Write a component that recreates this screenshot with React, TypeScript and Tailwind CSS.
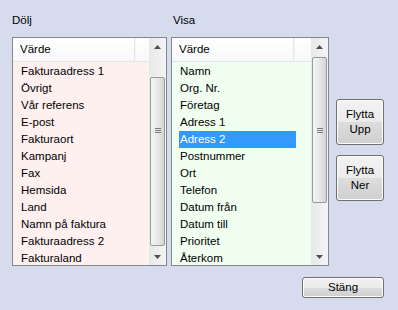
import React from "react"

const hidden = [
  "Fakturaadress 1",
  "Övrigt",
  "Vår referens",
  "E-post",
  "Fakturaort",
  "Kampanj",
  "Fax",
  "Hemsida",
  "Land",
  "Namn på faktura",
  "Fakturaadress 2",
  "Fakturaland",
]

const shown = [
  "Namn",
  "Org. Nr.",
  "Företag",
  "Adress 1",
  "Adress 2",
  "Postnummer",
  "Ort",
  "Telefon",
  "Datum från",
  "Datum till",
  "Prioritet",
  "Återkom",
]

function Arrow({ up }: { up?: boolean }) {
  return (
    <div className="h-[17px] flex items-center justify-center">
      <svg width="7" height="4" viewBox="0 0 7 4">
        {up ? <path d="M0 4 L3.5 0 L7 4 Z" fill="#4d4d4d" /> : <path d="M0 0 L3.5 4 L7 0 Z" fill="#4d4d4d" />}
      </svg>
    </div>
  )
}

function ScrollBar({ before, thumb, grip }: { before: number; thumb: number; grip: number }) {
  return (
    <div className="w-[17px] h-full flex flex-col bg-gradient-to-r from-[#e8e8e8] to-[#f4f4f4] shrink-0">
      <Arrow up />
      <div className="flex-1 flex flex-col items-center">
        <div style={{ height: before }} />
        <div
          className="w-[15px] rounded-[2px] border border-[#9a9a9a] bg-gradient-to-r from-[#f5f5f5] via-[#e8e8e8] to-[#d4d4d4] flex flex-col items-center gap-[1px]"
          style={{ height: thumb, paddingTop: grip }}
        >
          <div className="w-[6px] h-[1px] bg-[#7a7a7a]" />
          <div className="w-[6px] h-[1px] bg-[#7a7a7a]" />
          <div className="w-[6px] h-[1px] bg-[#7a7a7a]" />
        </div>
      </div>
      <Arrow />
    </div>
  )
}

function ListBox({
  items,
  bg,
  width,
  selected,
  before,
  thumb,
  grip,
}: {
  items: string[]
  bg: string
  width: string
  selected?: number
  before: number
  thumb: number
  grip: number
}) {
  return (
    <div className={`${width} h-[229px] border border-[#828790] flex ${bg}`}>
      <div className="flex-1 flex flex-col overflow-hidden">
        <div className="h-[24px] shrink-0 flex bg-gradient-to-b from-white to-[#f7f8fa] border-b border-[#e5e5e5]">
          <div className="w-[122px] pl-[7px] flex items-center border-r border-[#e5e5e5]">Värde</div>
          <div className="w-[1px] bg-[#f5f5f5]" />
        </div>
        <div className="pt-[1px]">
          {items.map((t, i) => (
            <div key={t} className="h-[17px] flex items-center">
              <div
                className={`w-[117px] ml-[7px] h-full flex items-center pl-[1px] ${i === selected ? "bg-[#3399ff] text-white" : ""}`}
              >
                {t}
              </div>
            </div>
          ))}
        </div>
      </div>
      <ScrollBar before={before} thumb={thumb} grip={grip} />
    </div>
  )
}

function Btn({ children, className }: { children: React.ReactNode; className: string }) {
  return (
    <div
      className={`${className} rounded-[3px] border border-[#707070] shadow-[inset_0_0_0_1px_#fcfcfc] bg-[linear-gradient(to_bottom,#f2f2f2_0%,#ebebeb_50%,#dddddd_50%,#cfcfcf_100%)] flex flex-col items-center justify-center leading-[15px] text-center`}
    >
      {children}
    </div>
  )
}

export default function App() {
  return (
    <div
      className="w-[398px] h-[310px] bg-[#d6dcee] text-black text-[11.5px] overflow-hidden"
      style={{ fontFamily: '"Liberation Sans", Arial, sans-serif' }}
    >
      <div className="flex pl-[12px] pt-[13px]">
        <div className="flex flex-col">
          <div className="h-[24px] leading-[14px]">Dölj</div>
          <ListBox items={hidden} bg="bg-[#fff0f0]" width="w-[155px]" before={22} thumb={169} grip={50} />
        </div>
        <div className="flex flex-col ml-[4px]">
          <div className="h-[24px] leading-[14px] pl-[2px]">Visa</div>
          <ListBox items={shown} bg="bg-[#f0fff0]" width="w-[158px]" selected={4} before={2} thumb={146} grip={70} />
        </div>
        <div className="flex flex-col ml-[7px] pt-[86px] gap-[10px]">
          <Btn className="w-[48px] h-[46px]">
            <span>Flytta</span>
            <span>Upp</span>
          </Btn>
          <Btn className="w-[48px] h-[46px]">
            <span>Flytta</span>
            <span>Ner</span>
          </Btn>
        </div>
      </div>
      <div className="flex pl-[302px] pt-[11px]">
        <Btn className="w-[82px] h-[21px]">Stäng</Btn>
      </div>
    </div>
  )
}
